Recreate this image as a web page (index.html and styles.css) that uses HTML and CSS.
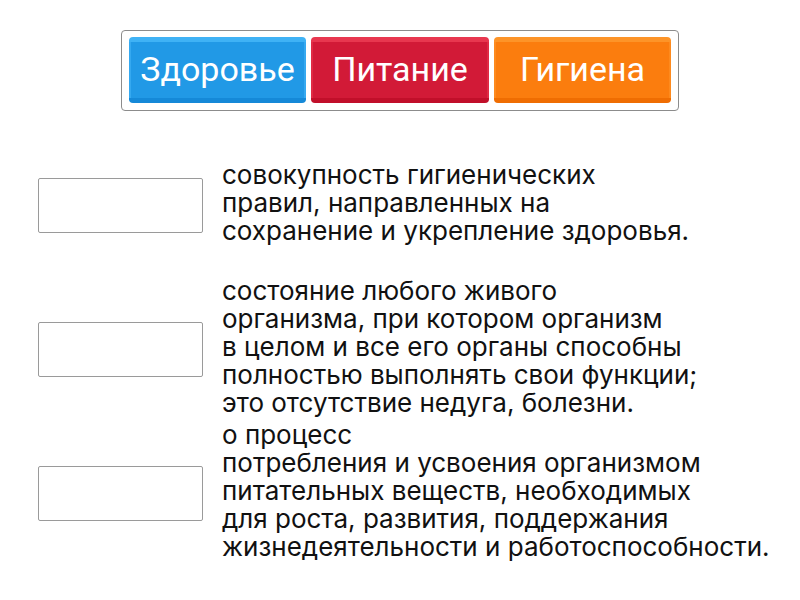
FILE: index.html
```html
<!DOCTYPE html>
<html lang="ru">
<head>
    <meta charset="UTF-8">
    <title>Сопоставление</title>
    <link rel="stylesheet" href="styles.css">
</head>
<body>
    <div class="page">
        <!-- варианты ответов -->
        <div class="bank">
            <div class="tile tile-blue">Здоровье</div>
            <div class="tile tile-red">Питание</div>
            <div class="tile tile-orange">Гигиена</div>
        </div>

        <!-- определения -->
        <div class="rows">
            <div class="row">
                <div class="slot"></div>
                <div class="def">совокупность гигиенических<br>правил, направленных на<br>сохранение и укрепление здоровья.</div>
            </div>
            <div class="row">
                <div class="slot"></div>
                <div class="def">состояние любого живого<br>организма, при котором организм<br>в целом и все его органы способны<br>полностью выполнять свои функции;<br>это отсутствие недуга, болезни.</div>
            </div>
            <div class="row">
                <div class="slot"></div>
                <div class="def">о процесс<br>потребления и усвоения организмом<br>питательных веществ, необходимых<br>для роста, развития, поддержания<br>жизнедеятельности и работоспособности.</div>
            </div>
        </div>
    </div>
</body>
</html>
```

FILE: styles.css
```css
body, html {
    margin: 0;
    padding: 0;
    background: #ffffff;
}

.page {
    width: 800px;
    height: 600px;
    padding-top: 30px;
    box-sizing: border-box;
}

/* блок с плитками */
.bank {
    width: 558px;
    height: 81px;
    margin-left: 121px;
    box-sizing: border-box;
    border: 1px solid #8c8c8c;
    border-radius: 4px;
    padding: 6px 7px 0 7px;
    display: flex;
    gap: 5px;
}

.tile {
    width: 177px;
    height: 66px;
    box-sizing: border-box;
    border-radius: 4px;
    border-top: 5px solid;
    border-bottom: 5px solid;
    padding-bottom: 3px;
    color: #ffffff;
    font-family: Roboto, "Liberation Sans", sans-serif;
    font-size: 34px;
    display: flex;
    align-items: center;
    justify-content: center;
}

.tile-blue {
    background: #2199e6;
    border-top-color: #3fb2f5;
    border-bottom-color: #1589d8;
    box-shadow: inset 2px 0 0 #35a9f0, inset -2px 0 0 #35a9f0;
}

.tile-red {
    width: 178px;
    background: #d21a37;
    border-top-color: #e8374f;
    border-bottom-color: #c10f2a;
    box-shadow: inset 2px 0 0 #e02a44, inset -2px 0 0 #e02a44;
}

.tile-orange {
    background: #fb7d0e;
    border-top-color: #fd9428;
    border-bottom-color: #ef6d02;
    box-shadow: inset 2px 0 0 #fd8a1e, inset -2px 0 0 #fd8a1e;
}

/* строки с определениями */
.rows {
    margin-top: 22px;
}

.row {
    height: 144px;
    display: flex;
    align-items: center;
}

.slot {
    width: 165px;
    height: 55px;
    box-sizing: border-box;
    margin-left: 38px;
    border: 1px solid #9a9a9a;
    border-radius: 2px;
}

.def {
    margin-left: 19px;
    margin-top: -4px;
    font-family: Inter, "Noto Sans", sans-serif;
    font-size: 26px;
    line-height: 28px;
    color: #111111;
}
```
